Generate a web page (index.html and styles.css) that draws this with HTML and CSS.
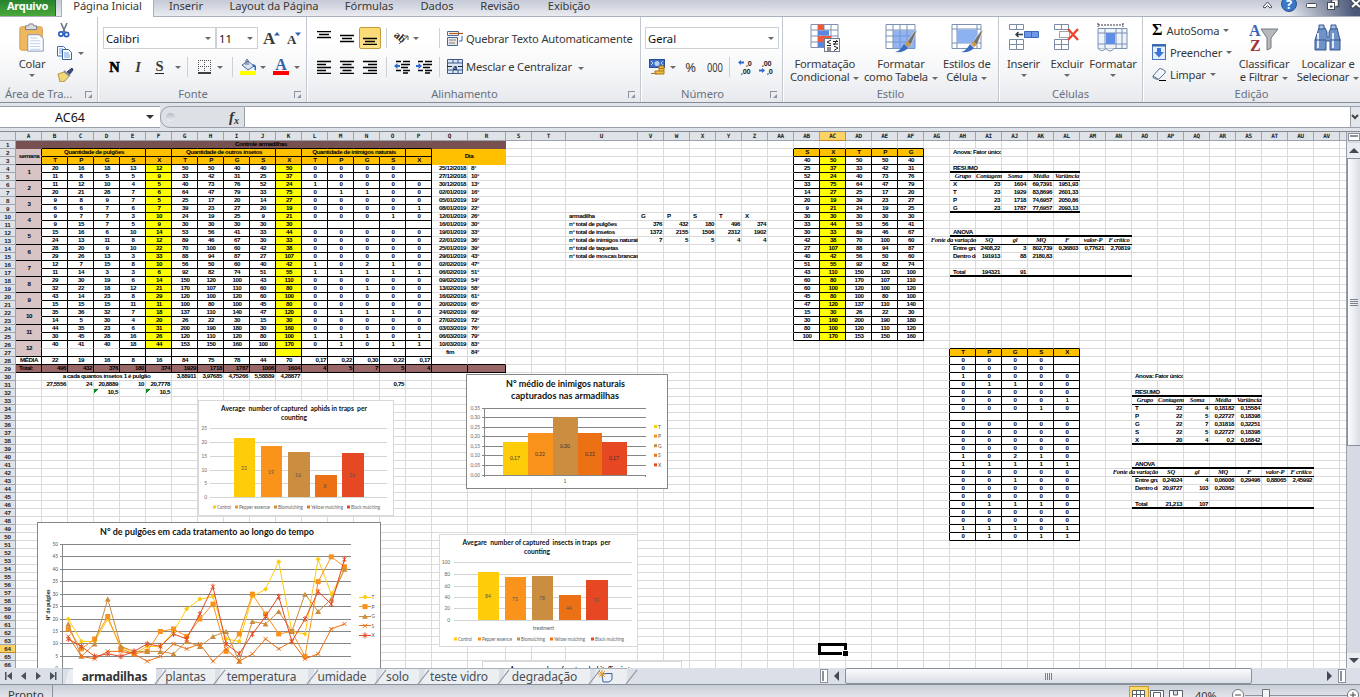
FILE: index.html
```html
<!DOCTYPE html>
<html lang="pt-BR">
<head>
<meta charset="utf-8">
<title>armadilhas</title>
<link rel="stylesheet" href="styles.css">
</head>
<body>
<div class="app">
  <nav class="tabs">
    <span class="tab file">Arquivo</span>
    <span class="tab active">Página Inicial</span>
    <span class="tab t-ins">Inserir</span>
    <span class="tab t-lay">Layout da Página</span>
    <span class="tab t-for">Fórmulas</span>
    <span class="tab t-dad">Dados</span>
    <span class="tab t-rev">Revisão</span>
    <span class="tab t-exi">Exibição</span>
    <svg class="wincontrols" width="100" height="16" viewBox="1260 0 100 16">
      <path d="M1263 7l4.500-5 4.500 5-2 1-2.500-2.500L1265 8z" fill="#fff" stroke="#444b57"/>
      <circle cx="1289" cy="4" r="7.500" fill="#3c78c8" stroke="#2a5595"/>
      <text x="1289" y="9" text-anchor="middle" class="help">?</text>
      <rect x="1306.500" y="3.500" width="10" height="4" rx="1" fill="#fff" stroke="#444b57"/>
      <path d="M1331.500 4V-.5h7v7h-3" fill="#fff" stroke="#444b57" stroke-width="1.500"/>
      <rect x="1327.500" y="2.500" width="7" height="7" fill="#fff" stroke="#444b57"/><rect x="1330" y="5.500" width="2.500" height="2" fill="#444b57"/>
      <path d="M1351 -1l9 9M1360 -1l-9 9" stroke="#444b57" stroke-width="4"/><path d="M1352 0l8 7M1360 0l-8 7" stroke="#fff" stroke-width="2"/>
    </svg>
  </nav>

  <section class="ribbon">
    <div class="group g-clip">
      <div class="clip-body">
        <div class="big"><svg width="28" height="32" viewBox="0 0 28 32">
          <rect x="1" y="4" width="24" height="25" rx="2" fill="#efb75e" stroke="#d39a45"/>
          <path d="M7 3h3l1-2h4l1 2h3v4H7z" fill="#d8dbe0" stroke="#737a84"/>
          <path d="M9.500 12.500h12l4.500 4v13.500H9.500z" fill="#fff" stroke="#7f93b5"/>
          <path d="M12 16h8M12 19h11M12 22h11M12 25h11M12 28h11" stroke="#b8cdee"/>
        </svg><b class="lbl">Colar</b><i class="arr"></i></div>
        <div class="smalls">
          <svg width="14" height="15" viewBox="0 0 14 15"><path d="M4 0l4 9M10 0L6 9" stroke="#6b7789" stroke-width="1.600"/><circle cx="4" cy="11" r="2.200" fill="none" stroke="#2b5fc0" stroke-width="1.700"/><circle cx="9.500" cy="11.500" r="2.200" fill="none" stroke="#2b5fc0" stroke-width="1.700"/></svg>
          <span class="copy"><svg width="16" height="14" viewBox="0 0 16 14"><path d="M.5.500h6l3 3v6.500h-9z" fill="#fff" stroke="#3d6fb8"/><path d="M2 3h4M2 5h5M2 7h5" stroke="#6aa0e8"/><path d="M5.500 3.500h6l3 3v7h-9z" fill="#fff" stroke="#3d5f98"/><path d="M7 7h5M7 9h6M7 11h6" stroke="#6aa0e8"/></svg><i class="arr"></i></span>
          <svg width="17" height="14" viewBox="0 0 17 14"><path d="M10 4l5-4 1 2-4 5z" fill="#3f4c7c" stroke="#2d355c"/><path d="M1 6l6-2 5 4-4 5-5 1z" fill="#f0d77a" stroke="#b89545"/><path d="M7 3l6 5" stroke="#8a8fa0" stroke-width="2"/></svg>
        </div>
      </div>
      <div class="gname"><span>Área de Tra...</span><i class="launch"></i></div>
    </div>

    <div class="group g-font">
      <div class="font-r1">
        <span class="combo">Calibri<i class="arr"></i></span><span class="combo">11<i class="arr"></i></span>
        <span class="serif grow">A<svg width="6" height="4" viewBox="0 0 6 4"><path d="M3 0l3 3.500H0z" fill="#2f5fb5"/></svg></span>
        <span class="serif shrink">A<svg width="6" height="4" viewBox="0 0 6 4"><path d="M0 .5h6L3 4z" fill="#2f5fb5"/></svg></span>
      </div>
      <div class="font-r2">
        <span class="serif heavy">N</span><span class="serif ital">I</span><span class="serif und">S</span><i class="arr"></i><i class="sep"></i>
        <svg width="13" height="14" viewBox="0 0 13 14"><path d="M.5 0v12M6.500 0v12M12.500 0v12M0 .5h13M0 6.500h13" stroke="#555" stroke-dasharray="1 1"/><path d="M0 13h13" stroke="#000" stroke-width="1.500"/></svg><i class="arr"></i><i class="sep"></i>
        <svg width="16" height="16" viewBox="0 0 16 16"><path d="M2 6l6-4 6 5-6 4z" fill="#dbe6f5" stroke="#52678c"/><path d="M6 6V1q1-1 2 0v5" fill="none" stroke="#52678c"/><path d="M13 6q4 2 2 5" fill="none" stroke="#2f68c4" stroke-width="2"/><rect y="12" width="16" height="4" fill="#ff0"/></svg><i class="arr"></i>
        <span class="serif fcolor">A</span><i class="arr"></i>
      </div>
      <div class="gname"><span>Fonte</span><i class="launch"></i></div>
    </div>

    <div class="group g-align">
      <div class="al-row al-top">
        <svg width="14" height="14" viewBox="0 0 14 14"><path d="M0 .5h14M2 3.500h10M0 6.500h14" class="ln"/></svg>
        <svg width="14" height="14" viewBox="0 0 14 14"><path d="M0 4.500h14M2 7.500h10M0 10.500h14" class="ln"/></svg>
        <span class="pressed"><svg width="14" height="14" viewBox="0 0 14 14"><path d="M0 7.500h14M2 10.500h10M0 13.500h14" class="ln"/></svg></span>
        <i class="sep"></i>
        <svg width="16" height="14" viewBox="0 0 16 14"><text x="0" y="9" class="ab abr" transform="rotate(40 5 6)">ab</text><path d="M5 13L14 5M10 5h4v4" fill="none" stroke="#555"/></svg><i class="arr"></i><i class="sep late"></i>
        <svg width="16" height="16" viewBox="0 0 16 16"><path d="M.5 1.500h11v4H.5z" fill="#fff" stroke="#4b6796"/><path d="M2 3.500h14" stroke="#b55a14" stroke-width="1.300"/><path d="M.5 7.500h10v8H.5z" fill="#dce7f8" stroke="#4b6796"/><path d="M2 10h7M2 13h6" stroke="#b07a3a"/><path d="M15 6v5h-3" fill="none" stroke="#2f5fb5"/></svg>
        <b class="lbl">Quebrar Texto Automaticamente</b>
      </div>
      <div class="al-row al-bottom">
        <svg width="14" height="14" viewBox="0 0 14 14"><path d="M0 1.500h14M0 4.500h9M0 7.500h14M0 10.500h9M0 13.500h14" class="ln"/></svg>
        <svg width="14" height="14" viewBox="0 0 14 14"><path d="M0 1.500h14M2.500 4.500h9M0 7.500h14M2.500 10.500h9M0 13.500h14" class="ln"/></svg>
        <svg width="14" height="14" viewBox="0 0 14 14"><path d="M0 1.500h14M5 4.500h9M0 7.500h14M5 10.500h9M0 13.500h14" class="ln"/></svg>
        <i class="sep"></i>
        <svg width="16" height="14" viewBox="0 0 16 14"><path d="M2 1.500h5M9 1.500h7M7 4.500h9M7 7.500h7M2 10.500h5M9 10.500h7M9 13h5" class="ln"/><path d="M0 6l3.500-3v2H6v2H3.500v2z" fill="#2f68d0"/></svg>
        <svg width="16" height="14" viewBox="0 0 16 14"><path d="M2 1.500h5M9 1.500h7M7 4.500h9M7 7.500h7M2 10.500h5M9 10.500h7M9 13h5" class="ln"/><path d="M6 6L2.500 3v2H0v2h2.500v2z" fill="#2f68d0"/></svg><i class="sep late"></i>
        <svg width="16" height="15" viewBox="0 0 16 15"><path d="M.5.500h15v14H.5zM.5 4h15M.5 11h15M6 .5V4M11 .5V4M6 11v3.500M11 11v3.500" fill="#dbe6f8" stroke="#3f5a88"/><path d="M0 7.500h5M11 7.500h5" stroke="#222"/><text x="8" y="10.500" text-anchor="middle" class="ab">a</text></svg>
        <b class="lbl">Mesclar e Centralizar<i class="arr"></i></b>
      </div>
      <div class="gname"><span>Alinhamento</span><i class="launch"></i></div>
    </div>

    <div class="group g-num">
      <span class="combo wide">Geral<i class="arr"></i></span>
      <div class="num-row">
        <svg width="16" height="16" viewBox="0 0 16 16"><rect x=".5" y=".5" width="15" height="8" fill="#3d6ec4" stroke="#254f98"/><circle cx="8" cy="4.500" r="2.500" fill="#b9d0f2"/><path d="M2 2l2 2-2 2M14 2l-2 2 2 2" stroke="#b9d0f2" fill="none"/><path d="M10 7h5v8H6v-3h4z" fill="#eebf43" stroke="#a87814"/><path d="M10 9.500h5M10 12h5M2 14.500h6" stroke="#a87814"/></svg>
        <i class="arr"></i><b class="lbl pct">%</b><b class="lbl zeros">000</b><i class="sep"></i>
        <svg width="16" height="16" viewBox="0 0 16 16"><text x="8" y="7" class="dec">,0</text><text x="3" y="15" class="dec">,00</text><path d="M0 3.500l3-2.500v1.500h3v2H3V6z" fill="#2f68d0"/></svg>
        <svg width="16" height="16" viewBox="0 0 16 16"><text x="3" y="7" class="dec">,00</text><text x="8" y="15" class="dec">,0</text><path d="M6 11.500L3 9v1.500H0v2h3V14z" fill="#2f68d0"/></svg>
      </div>
      <div class="gname"><span>Número</span><i class="launch"></i></div>
    </div>

    <div class="group g-style">
      <div class="bigs">
        <div class="big"><svg width="30" height="30" viewBox="0 0 30 30"><path d="M1 1.500h27v23H1zM8 1v23M14 1v23M21 1v23M1 7h27M1 13h27M1 19h27" fill="#fff" stroke="#7b90b2"/><path d="M8 1.500h6V7H8zM8 13h13v6H8z" fill="#ef5a3c"/><path d="M8 7.500h11v5H8zM8 19h6v5H8z" fill="#5a86e0"/><rect x="14.500" y="15.500" width="15" height="13" fill="#fff" stroke="#6d7b90"/><path d="M21 17l-4 2 4 2M17 22.500h4M23 18.500h5M23 21h5M27 17l-3 5M17 25h4M17 27h4M24 23l4 2-4 2.500" fill="none" stroke="#222"/></svg><b class="lbl">Formatação<br>Condicional<i class="arr"></i></b></div>
        <div class="big"><svg width="32" height="30" viewBox="0 0 32 30"><path d="M1 1.500h29v24H1zM8 1v24M15 1v24M22 1v24M1 7h29M1 13h29M1 19h29" fill="#fff" stroke="#7b90b2"/><path d="M8 7.500h22v18H8z" fill="#6f9be8" opacity=".75"/><path d="M29 9l3-2-6 15-4-3z" fill="#75706c" stroke="#eee" stroke-width=".6"/><path d="M22 18l4 4-3 2-3-3z" fill="#c99a4b"/><path d="M10 29q5-1 9-8l4 4q-4 5-13 4z" fill="#3a6cc0"/></svg><b class="lbl">Formatar<br>como Tabela<i class="arr"></i></b></div>
        <div class="big"><svg width="32" height="30" viewBox="0 0 32 30"><path d="M1 1.500h29v24H1zM6 1v24M26 1v24M1 6h29M1 20h29" fill="#fff" stroke="#7b90b2"/><path d="M6 6.500h20v13.500H6z" fill="#8cb2f2"/><path d="M29 9l3-2-6 15-4-3z" fill="#75706c" stroke="#eee" stroke-width=".6"/><path d="M22 18l4 4-3 2-3-3z" fill="#c99a4b"/><path d="M10 29q5-1 9-8l4 4q-4 5-13 4z" fill="#3a6cc0"/></svg><b class="lbl">Estilos de<br>Célula<i class="arr"></i></b></div>
      </div>
      <div class="gname"><span>Estilo</span></div>
    </div>

    <div class="group g-cells">
      <div class="bigs">
        <div class="big"><svg width="30" height="30" viewBox="0 0 30 30"><path d="M.5 1.500h14v5H.5zM7.500 1.500v5M.5 16.500h14v10H.5zM7.500 16.500v10M.5 21.500h14" fill="#fff" stroke="#7b8ba5"/><path d="M15.500 8.500h14v6h-14zM22.500 8.500v6" fill="#6c97e8" stroke="#3f69b5"/><path d="M7 11.500h7M9.500 9L7 11.500 9.500 14" fill="none" stroke="#333b4a" stroke-width="1.500"/></svg><b class="lbl">Inserir</b><i class="arr"></i></div>
        <div class="big"><svg width="26" height="30" viewBox="0 0 26 30"><path d="M.5 1.500h14v5H.5zM7.500 1.500v5M.5 16.500h14v10H.5zM7.500 16.500v10M.5 21.500h14" fill="#fff" stroke="#7b8ba5"/><path d="M5.500 8.500h10v6h-10z" fill="none" stroke="#444" stroke-dasharray="1 1"/><path d="M14 6l10 11M24 6L14 17" stroke="#f0412a" stroke-width="2.200"/></svg><b class="lbl">Excluir</b><i class="arr"></i></div>
        <div class="big"><svg width="32" height="30" viewBox="0 0 32 30"><path d="M1 0v4M26 0v4M1 2h25" stroke="#334" stroke-dasharray="2 1"/><path d="M1 5.500h29v20H1zM8 5v20M19 5v20M25 5v20M1 10h29M1 21h29" fill="#eff3fa" stroke="#7b90b2"/><rect x="9" y="10" width="9" height="11" fill="#5e8ee8"/><path d="M1 25.500q4 4 8 0M9 25.500q4 5 8 0" fill="#fff" stroke="#7b90b2"/></svg><b class="lbl">Formatar</b><i class="arr"></i></div>
      </div>
      <div class="gname"><span>Células</span></div>
    </div>

    <div class="group g-edit">
      <div class="edit-body">
        <div class="edit-list">
          <span><em class="sigma">Σ</em><b class="lbl">AutoSoma</b><i class="arr"></i></span>
          <span><svg width="14" height="16" viewBox="0 0 14 16"><rect x=".5" y=".5" width="13" height="15" fill="#e5eefc" stroke="#4b76b8"/><path d="M0 1.500h14" stroke="#3465ad" stroke-width="2"/><path d="M5 4h4v4h3l-5 5.500L2 8h3z" fill="#3d74d8"/></svg><b class="lbl">Preencher</b><i class="arr"></i></span>
          <span><svg width="14" height="13" viewBox="0 0 14 13"><path d="M1 8l6-7q1-1 3 0l3 2q1 1 0 2l-6 6q-1 1-3 0L1 9.500z" fill="#f2f5fa" stroke="#5c6f92"/><path d="M1 8l5 3" stroke="#5c6f92"/><path d="M7 12.500h7" stroke="#000"/></svg><b class="lbl">Limpar</b><i class="arr"></i></span>
        </div>
        <div class="big"><svg width="30" height="30" viewBox="0 0 30 30"><path d="M12 6h17l-7 9v10l-4 2V15z" fill="#b5b8bc" stroke="#77797d"/><text x="0" y="13" class="az a">A</text><text x="1" y="28" class="az z">Z</text></svg><b class="lbl">Classificar<br>e Filtrar<i class="arr"></i></b></div>
        <div class="big"><svg width="28" height="26" viewBox="0 0 28 26"><path d="M5 3h6l2 4v5h2V7l2-4h6l3 12v10H16v-9h-4v9H1V15z" fill="#6f93c8" stroke="#35568f"/><path d="M5 0h5v4H5zM17 0h5v4h-5z" fill="#a9c1e4" stroke="#35568f"/><path d="M4 8v15M19 8v15" stroke="#dfe9f8" stroke-width="2"/><path d="M1 15h11M16 15h11" stroke="#35568f"/></svg><b class="lbl">Localizar e<br>Selecionar<i class="arr"></i></b></div>
      </div>
      <div class="gname"><span>Edição</span></div>
    </div>
  </section>

  <div class="formula">
    <span class="namebox"><span>AC64</span><i class="arr dark"></i></span>
    <span class="fx"><i class="knob"></i><em>f<sub>x</sub></em></span>
    <span class="finput"></span>
    <span class="fexp"><svg width="8" height="6" viewBox="0 0 8 6"><path d="M1 1l3 3 3-3" fill="none" stroke="#444" stroke-width="2"/></svg></span>
  </div>

  <div class="work">
    <div class="sheet"><div class="grid" id="grid"></div><div class="charts" id="charts"></div></div>
    <div class="vscroll"><i class="split"></i><i class="btn up"></i><i class="thumb"><i></i><i></i><i></i><i></i></i><i class="btn down"></i></div>
  </div>

  <div class="sheetbar">
    <svg width="63" height="16" viewBox="0 0 63 16"><g fill="#4a4f58"><path d="M5 4h1.500v8H5zM12 4v8L7 8zM26 4v8l-5-4zM36 4v8l5-4zM50 4v8l5-4zM55 4h1.500v8H55z"/></g><path d="M62.500 0v16" stroke="#a5abb5"/></svg>
    <span class="st first"></span><span class="st on w1">armadilhas</span><span class="st w2">plantas</span><span class="st w3">temperatura</span><span class="st w4">umidade</span><span class="st w5">solo</span><span class="st w6">teste vidro</span><span class="st w7">degradação</span>
    <span class="st w8"><svg width="16" height="13" viewBox="0 0 16 13"><path d="M4 3.500h10v6l-3 2.500H5z" fill="#e9f0fb" stroke="#3d5f98"/><path d="M4 0v8M0 4h8M1 1l6 6M7 1L1 7" stroke="#e09a2a"/></svg></span>
    <span class="fill"></span>
    <span class="hscroll"><i class="handle"></i><i class="hb left"></i><i class="hthumb"><i></i><i></i><i></i><i></i></i><i class="hb right"></i><i class="handle"></i></span>
  </div>
  <footer class="status"><span class="ready">Pronto</span>
    <span class="views"><svg width="231" height="14" viewBox="1129 684 231 14">
      <rect x="1129.500" y="685.500" width="19" height="14" fill="#ffd868" stroke="#c49a35"/>
      <path d="M1132.500 689.500h12v9h-12zM1136.500 689v9M1140.500 689v9M1132 693.500h12M1150.500 689.500h13v9h-13zM1153.500 691.500h7v7h-7zM1169.500 689.500h13v9h-13zM1173.500 689v5h4v-5" fill="#fff" stroke="#56606f"/>
      <text x="1195" y="698.500" class="zoomtx">40%</text>
      <circle cx="1238" cy="694" r="5.500" fill="#fff" stroke="#70757e"/><path d="M1235 694h6" stroke="#444"/>
      <path d="M1245 694.500h103" stroke="#8b919c"/><path d="M1262.500 688.500h7v10h-7z" fill="#f4f5f7" stroke="#70757e"/>
      <circle cx="1353" cy="694" r="5.500" fill="#fff" stroke="#70757e"/><path d="M1350 694h6M1353 691v6" stroke="#444"/>
    </svg></span>
  </footer>
</div>
<script src="sheet.js"></script>
</body>
</html>
```
FILE: styles.css
```css
* { box-sizing: border-box; }
body { margin: 0; width: 1360px; height: 697px; overflow: hidden; background: #dfe3ea; font-family: "Noto Sans", "Open Sans", sans-serif; font-size: 11.200px; color: #383838; }
.app { display: flex; flex-direction: column; height: 697px; overflow: hidden; }
svg { display: block; flex: none; }
i, em { font-style: normal; }
b { font-weight: normal; }

.tabs { height: 17px; flex: none; display: flex; background: linear-gradient(90deg, transparent 1290px, #4a5878 1355px), linear-gradient(#c5cad7, #e9ebf0); border-bottom: 1px solid #a9b0ba; }
.tab { height: 16px; line-height: 12px; text-align: center; white-space: nowrap; letter-spacing: -.1px; }
.file { width: 56px; background: linear-gradient(#27822f, #4aa83a); color: #fff; font-weight: bold; font-size: 11px; border-right: 1px solid #1c6a24; letter-spacing: -.25px; }
.active { width: 93px; margin-left: 5px; height: 17px; background: #fff; border: 1px solid #a9b0ba; border-width: 0 1px; }
.t-ins { width: 64px; } .t-lay { width: 112px; } .t-for { width: 78px; } .t-dad { width: 58px; } .t-rev { width: 68px; } .t-exi { width: 70px; }
.wincontrols { margin-left: auto; }
.help { font: bold 13px "Open Sans", sans-serif; fill: #fff; }

.ribbon { height: 86px; flex: none; display: flex; background: linear-gradient(#fff 30%, #f3f4f6 70%, #e7e9ed); border-bottom: 1px solid #868c95; }
.group { display: flex; flex-direction: column; border-right: 1px solid #c3c8d0; box-shadow: 1px 0 #fff; }
.g-clip { width: 98px; } .g-font { width: 209px; } .g-align { width: 334px; } .g-num { width: 142px; } .g-style { width: 216px; } .g-cells { width: 144px; } .g-edit { width: 217px; border: 0; }
.gname { margin-top: auto; height: 16px; display: flex; justify-content: center; align-items: center; position: relative; color: #68717f; line-height: 12px; white-space: nowrap; }
.g-font .gname, .g-align .gname, .g-num .gname { padding-right: 18px; }
.gname span { letter-spacing: -.1px; }
.g-clip .gname { justify-content: flex-start; padding-left: 5px; }
.launch { position: absolute; right: 5px; top: 5px; width: 7px; height: 7px; border: 1px solid #8b929d; border-width: 1px 0 0 1px; }
.launch::after { content: ""; position: absolute; right: 0; bottom: 0; border: 2px solid #8b929d; border-top-color: transparent; border-left-color: transparent; }
.arr { display: inline-block; width: 0; height: 0; border: 3px solid transparent; border-top: 3px solid #6a6a6a; border-bottom: 0; vertical-align: middle; flex: none; }
.arr.dark { border-width: 4px 4px 0; border-top-color: #333; }
.sep { width: 1px; height: 20px; background: #cdd1d7; }
.lbl { white-space: nowrap; line-height: 13px; text-align: center; letter-spacing: -.2px; }
.lbl .arr { margin-left: 4px; }
.big { display: flex; flex-direction: column; align-items: center; height: 68px; }
.big svg { height: 30px; margin: 6px 0 4px; }
.big > .arr { margin-top: 4px; }

.clip-body { display: flex; height: 68px; }
.clip-body .big { width: 64px; margin-right: -8px; }
.smalls { display: flex; flex-direction: column; gap: 8px; padding: 6px 0 0 1px; }
.copy { display: flex; align-items: center; gap: 5px; }

.combo { display: flex; align-items: center; justify-content: space-between; height: 22px; border: 1px solid #cdd0d4; background: #fff; color: #111; padding: 0 4px 0 2px; }
.combo.wide { margin: 10px 3px 0 4px; width: 134px; }
.font-r1 { display: grid; grid-template-columns: 113px 42px 21px 24px; padding: 10px 0 0 5px; height: 32px; }
.serif { font-family: "Liberation Serif", serif; font-weight: bold; color: #3a3a3a; display: flex; line-height: 22px; }
.grow { font-size: 17px; line-height: 24px; padding-left: 5px; } .shrink { font-size: 13px; line-height: 26px; padding-left: 8px; }
.grow svg { margin: 5px 0 0 -1px; } .shrink svg { margin: 5px 0 0 -1px; }
.font-r2 { display: grid; grid-template-columns: 31px 16px 27px 9px 10px 24px 8px 16px 16px 14px 22px 9px; justify-items: center; align-items: center; height: 28px; padding-left: 1px; margin-top: 4px; }
.font-r2 .serif { font-size: 14.500px; line-height: 15px; }
.font-r2 .heavy { color: #000; -webkit-text-stroke: .6px #000; }
.ital { font-style: italic; }
.font-r2 .und { border-bottom: 1.500px solid #222; line-height: 13px; }
.font-r2 .fcolor { font-size: 16px; line-height: 12px; color: #345fa8; border-bottom: 4px solid #f00; width: 16px; justify-content: center; }
.ln { stroke: #000; stroke-width: 1.400; fill: none; }
.al-row { display: grid; justify-items: center; align-items: center; height: 29px; padding-left: 5px; }
.al-top { grid-template-columns: 23px 23px 23px 11px 20px 7px 28px 16px auto; margin-top: 6px; height: 30px; }
.al-bottom { grid-template-columns: 23px 23px 23px 11px 20px 23px 12px 16px auto; height: 27px; }
.al-row .lbl { justify-self: start; margin-left: 3px; }
.al-row .late { justify-self: end; margin-right: 7px; }
.al-row .lbl .arr { margin-left: 6px; }
.pressed { width: 22px; height: 22px; border: 1px solid #c29b3a; border-radius: 2px; background: linear-gradient(#fbd872, #ffe48a); display: flex; align-items: center; justify-content: center; }
.ab { font: bold 9px "Liberation Serif", serif; fill: #222; } .abr { font-size: 11px; }
.dec { font: bold 7px "Noto Sans", sans-serif; fill: #333; letter-spacing: -.3px; }
.num-row { display: grid; grid-template-columns: 26px 5px 31px 17px 13px 19px 24px; justify-items: center; align-items: center; height: 30px; margin-top: 3px; padding-left: 3px; }
.pct { font-size: 13px; } .zeros { font-size: 13px; transform: scaleX(.72); }
.bigs { display: flex; }
.g-style .big:nth-child(1) { width: 84px; } .g-style .big:nth-child(2) { width: 69px; } .g-style .big:nth-child(3) { width: 63px; }
.g-cells .big:nth-child(1) { width: 49px; } .g-cells .big:nth-child(2) { width: 38px; } .g-cells .big:nth-child(3) { width: 54px; }
.edit-body { display: flex; height: 68px; }
.edit-list { width: 86px; padding-top: 2px; }
.edit-list span { display: flex; align-items: center; height: 22px; padding-left: 9px; gap: 4px; }
.edit-list svg, .sigma { width: 14px; text-align: center; }
.sigma { font: bold 16px "Liberation Serif", serif; color: #000; }
.g-edit .big:nth-child(2) { width: 70px; } .g-edit .big:nth-child(3) { width: 58px; }
.az { font: bold 16px "Liberation Serif", serif; } .a { fill: #3a66b8; } .z { fill: #a03434; }

.formula { height: 29px; flex: none; display: flex; padding: 3px 0 4px; background: #dfe3ea; border-bottom: 1px solid #868b93; }
.formula > span { border: 1px solid #9aa0aa; border-width: 1px 0; height: 22px; }
.namebox { width: 160px; background: #fff; display: flex; align-items: center; justify-content: space-between; padding: 0 6px 0 55px; color: #111; font-size: 12.500px; }
.formula > .fx { width: 85px; display: flex; align-items: center; justify-content: space-between; padding-right: 5px; border-width: 1px; border-radius: 10px 0 0 10px; background: #dde1e6; }
.knob { width: 9px; height: 8px; border-radius: 50%; margin-left: 5px; background: linear-gradient(#b5bac2, #eceef1); }
.fx em { font: italic bold 15px "Liberation Serif", serif; color: #333; } .fx sub { font-size: 10px; vertical-align: -2px; }
.finput { flex: 1; background: #fff; }
.formula > .fexp { width: 10px; border-left-width: 1px; display: flex; align-items: center; background: #e3e6ea; }

.work { height: 536px; flex: none; display: flex; }
.sheet { width: 1346px; height: 536px; overflow: hidden; position: relative; background: #fff; }
.grid { display: grid; grid-template-columns: 16px repeat(16, 26px) 36px 38px 26px 34px 72px repeat(27, 26px) 7px; grid-template-rows: 9px repeat(66, 8px); font: bold 6.200px/6px "Liberation Sans", Arial, sans-serif; letter-spacing: -.4px; color: #000; }
.c { border: solid #dadada; border-width: 0 1px 1px 0; }
.hd { background: #dfe3e8; border-color: #9da3ac; color: #222; text-align: center; white-space: nowrap; overflow: hidden; line-height: 7px; letter-spacing: -.2px; }
.ch { line-height: 8px; font-family: "DejaVu Sans Mono", monospace; font-size: 6px; letter-spacing: -.3px; }
.hd.sel { background: #fcd364; border-color: #c08a2b; }
.orange { background: #ffc000; } .yellow { background: #ff0; } .pink { background: #d8c4c4; } .brown { background: #775050; } .wine { background: #996767; }
.nb { border-color: transparent; }
.br { border-right-color: #000; } .bb { border-bottom-color: #000; } .gb { border-bottom-color: #dadada; }
.mr { border-right-color: transparent; }
.t { white-space: nowrap; overflow: hidden; display: flex; align-items: center; justify-content: center; min-width: 0; z-index: 1; padding-bottom: 2px; }
.t.l { justify-content: flex-start; padding-left: 3px; } .t.r { justify-content: flex-end; padding-right: 2px; }
.t.o { overflow: visible; } .t.w { background: #fff; margin: 0 1px 1px 0; padding-bottom: 1px; }
.t.i { font-style: italic; font-family: "Liberation Serif", serif; font-size: 6.500px; letter-spacing: -.2px; border-bottom: 1px solid #000; padding-bottom: 1px; }
.t.i.o { justify-content: flex-end; }
.thick { border-bottom: 2px solid #000; }
.tri { width: 5px; height: 5px; background: linear-gradient(135deg, #0a8a20 50%, transparent 50%); z-index: 2; }
.cursor { outline: 3px solid #000; outline-offset: -1px; margin: 0 1px 0 0; z-index: 3; position: relative; }
.cursor::after { content: ""; position: absolute; right: -3px; bottom: -3px; width: 5px; height: 5px; background: #000; border: solid #fff; border-width: 1px 0 0 1px; }
.charts svg { position: absolute; background: #fff; z-index: 5; }
.charts text { font-family: Lato, "Open Sans", sans-serif; }

.vscroll { width: 14px; height: 536px; background: #d5dae3; border-left: 1px solid #9aa0aa; display: flex; flex-direction: column; }
.split { height: 8px; background: #fff; border: 1px solid #8b919b; margin: 1px 0 2px 1px; flex: none; box-shadow: inset 0 0 0 1px #fff, inset 0 3px #8b919b; }
.btn { height: 15px; flex: none; background: #e9ecf1; display: flex; justify-content: center; align-items: center; }
.btn::after { content: ""; border: 5px solid transparent; border-bottom-color: #444a54; border-top: 0; }
.down { margin-top: auto; } .down::after { border-top: 5px solid #444a54; border-bottom: 0; }
.thumb { height: 288px; border: 1px solid #8b919b; border-right: 0; background: linear-gradient(90deg, #fafbfc, #d9dee6); display: flex; flex-direction: column; align-items: center; justify-content: center; gap: 1px; }
.thumb i { width: 8px; height: 1px; background: #7b828e; }

.sheetbar { height: 17px; flex: none; display: flex; background: #dbe0e8; border-bottom: 1px solid #8b919b; color: #4a4f58; font-size: 12px; letter-spacing: -.15px; overflow: hidden; }
.st { height: 16px; line-height: 15px; text-align: center; background: linear-gradient(105deg, transparent 6px, #eceff2 6px); border-top: 1px solid #a9afb9; position: relative; white-space: nowrap; }
.st::after { content: ""; position: absolute; right: -5px; top: -1px; width: 1px; height: 18px; background: #8b919b; transform: rotate(38deg); z-index: 2; }
.on { background: #fff; font-weight: bold; color: #333; border-top-color: #fff; }
.first { width: 10px; } .first::after { display: none; } .w1 { width: 83px; } .w2 { width: 59px; } .w3 { width: 93px; } .w4 { width: 68px; } .w5 { width: 43px; } .w6 { width: 80px; } .w7 { width: 91px; } .w8 { width: 37px; padding: 1px 0 0 8px; }
.fill { flex: 1; }
.hscroll { width: 540px; display: flex; height: 16px; align-items: center; }
.handle { width: 8px; height: 14px; border: 1px solid #8b919b; background: #fff; box-shadow: inset 0 0 0 1px #fff, inset 3px 0 #8b919b; }
.hb { width: 17px; display: flex; justify-content: center; } .hb::after { content: ""; border: 5px solid transparent; border-right-color: #444a54; border-left: 0; }
.right { margin-left: auto; } .right::after { border-left: 5px solid #444a54; border-right: 0; }
.right + .handle { margin-right: 14px; }
.hthumb { width: 407px; height: 16px; border: 1px solid #8b919b; border-radius: 2px; background: linear-gradient(#fafbfc, #d9dee6); display: flex; justify-content: center; align-items: center; gap: 1px; }
.hthumb i { width: 1px; height: 7px; background: #7b828e; }
.status { flex: 1; display: flex; background: linear-gradient(#c9ced7, #e1e4ea); justify-content: space-between; overflow: hidden; }
.ready { width: 53px; border-right: 1px solid #8b919b; padding-left: 8px; line-height: 19px; height: 14px; }
.zoomtx { font: 11px "Noto Sans", sans-serif; fill: #383838; }
```
FILE: sheet.js
```javascript
const grid = document.getElementById('grid');
const cells = {};
const names = [];
for (let i = 1; i <= 49; i++) names.push(i <= 26 ? String.fromCharCode(64 + i) : 'A' + String.fromCharCode(64 + i - 26));
const col = n => names.indexOf(n) + 1;
const ROWS = 66, COLS = 49;

for (let r = 0; r <= ROWS; r++) {
  for (let c = 0; c <= COLS; c++) {
    const d = document.createElement('div');
    d.className = 'c' + (r === 0 || c === 0 ? ' hd' : '') + (r === 0 ? ' ch' : '');
    if (r === 0 && c > 0 && c < 49) d.textContent = names[c - 1];
    if (c === 0 && r > 0) d.textContent = r;
    if ((r === 0 && c === col('AC')) || (c === 0 && r === 64)) d.classList.add('sel');
    d.style.gridArea = `${r + 1}/${c + 1}`;
    grid.append(d);
    cells[r + ',' + c] = d;
  }
}

function area(r, c, r2, c2, cls, txt) {
  const d = document.createElement('div');
  d.className = cls;
  d.style.gridArea = `${r + 1}/${c + 1}/${r2 + 2}/${c2 + 2}`;
  if (txt !== undefined) d.textContent = txt;
  grid.append(d);
  return d;
}
const put = (r, c, txt, cls = '') => area(r, c, r, c, 't ' + cls, txt);
function fill(r, c, r2, c2, cls) {
  for (let y = r; y <= r2; y++) for (let x = c; x <= c2; x++) cells[y + ',' + x].classList.add(...cls.split(' '));
}
function box(r, c, r2, c2) {
  fill(r, c, r2, c2, 'br bb');
  if (c > 1) fill(r, c - 1, r2, c - 1, 'br');
  if (r > 1) fill(r - 1, c, r - 1, c2, 'bb');
}
const nums = s => s.split(' ');

/* trap counts per week */
const cols = {
  B: '20 11 11 20 9 6 9 9 15 24 28 29 12 11 29 32 43 15 35 14 44 30 40',
  C: '16 8 12 21 8 6 7 15 16 13 20 26 7 14 30 22 14 15 36 5 35 45 41',
  D: '18 5 10 28 9 7 7 7 6 11 9 13 15 3 19 18 23 15 32 30 23 28 40',
  E: '13 5 4 7 7 6 3 5 10 8 10 3 8 3 6 12 8 11 7 4 6 16 18',
  F: '12 9 5 6 5 7 10 9 14 12 22 33 10 6 14 21 29 11 18 20 31 26 44',
  G: '50 33 40 64 25 39 24 30 53 89 70 88 56 92 150 170 120 100 137 26 200 120 153',
  H: '50 42 73 47 17 23 19 30 56 46 100 94 50 82 120 107 100 80 110 22 190 110 150',
  I: '40 31 76 79 20 27 25 30 41 67 60 87 60 74 100 110 120 100 140 30 180 120 160',
  J: '40 25 52 33 14 20 9 30 33 30 42 27 40 51 43 60 60 45 47 15 30 80 100',
  K: '50 37 24 75 27 19 21 30 44 33 38 107 42 55 110 80 100 80 120 30 160 100 170'
};
const enemies = ['0000 ', '0000 ', '10000', '01100', '00000', '00001', '00010', '     ', '00000', '00000', '00000', '00000', '10210', '11111', '00000', '00100', '00000', '00000', '01110', '00000', '00000', '11101', '01011'];

fill(1, 1, 1, 18, 'brown nb');
area(1, 1, 1, 18, 't', 'Controle armadilhas');
box(2, 2, 28, 16);
fill(2, 2, 3, 16, 'orange');
fill(2, 17, 3, 18, 'orange nb');
fill(2, 1, 27, 1, 'pink nb');
fill(2, 1, 28, 1, 'br');
[[2, 5, 'Quantidade de pulgões'], [7, 10, 'Quantidade de outros insetos'], [12, 15, 'Quantidade de inimigos naturais']].forEach(([a, b, s]) => {
  fill(2, a, 2, b - 1, 'mr');
  area(2, a, 2, b, 't', s);
});
'TPGSXTPGSXTPGSX'.split('').forEach((s, i) => put(3, 2 + i, s));
area(2, 17, 3, 18, 't', 'Dia');
area(2, 1, 3, 1, 't', 'semana');
fill(4, 6, 26, 6, 'yellow');
fill(4, 11, 27, 11, 'yellow');
fill(26, 2, 26, 4, 'gb');
for (let w = 0; w < 13; w++) cells[(3 + 2 * w) + ',1'].classList.add('bb');
for (let w = 1; w <= 12; w++) area(2 + 2 * w, 1, 3 + 2 * w, 1, 't', w);
for (const k in cols) nums(cols[k]).forEach((v, i) => put(4 + i, col(k), v));
enemies.forEach((row, i) => row.split('').forEach((v, j) => {
  if (v !== ' ') { put(4 + i, 12 + j, v); }
}));
const dates = '25/12/2018 27/12/2018 30/12/2018 02/01/2019 05/01/2019 08/01/2019 12/01/2019 16/01/2019 19/01/2019 22/01/2019 25/01/2019 29/01/2019 02/02/2019 06/02/2019 09/02/2019 13/02/2019 16/02/2019 20/02/2019 24/02/2019 27/02/2019 03/03/2019 06/03/2019 10/03/2019 fim';
const days = '8 10 13 16 19 22 26 30 33 36 39 43 47 51 54 58 61 65 69 72 76 79 83 84';
nums(dates).forEach((v, i) => put(4 + i, 17, v, v === 'fim' ? '' : 'r'));
nums(days).forEach((v, i) => put(4 + i, 18, v + '°', 'l'));
put(28, 1, 'MÉDIA', 'o');
nums('22 19 16 8 16 84 75 78 44 70').forEach((v, i) => put(28, 2 + i, v));
nums('0,17 0,22 0,30 0,22 0,17').forEach((v, i) => put(28, 12 + i, v, 'r'));
box(29, 1, 29, 18);
fill(29, 1, 29, 18, 'wine');
put(29, 1, 'Total:', 'l');
nums('496 432 376 180 374 1929 1718 1787 1006 1604 4 5 7 5 4').forEach((v, i) => put(29, 2 + i, v, 'r'));
area(30, 2, 30, 6, 't w', 'a cada quantos insetos 1 é pulgão');
nums('3,88911 3,97685 4,75266 5,58889 4,28877').forEach((v, i) => put(30, 7 + i, v, 'r'));
nums('27,5556 24 20,8889 10 20,7778').forEach((v, i) => put(31, 2 + i, v, 'r'));
put(31, 15, '0,75', 'r');
[4, 6].forEach(c => { put(32, c, '10,5', 'r'); area(32, c, 32, c, 'tri'); });

/* totals by treatment */
['armadilha', 'n° total de pulgões', 'n° total de insetos', 'n° total de inimigos naturais', 'n° total de taquetas', 'n° total de moscas brancas'].forEach((v, i) => put(10 + i, 21, v, 'l'));
nums('G P S T X').forEach((v, i) => put(10, 22 + i, v, 'l'));
['376 432 180 496 374', '1372 2155 1506 2312 1902', '7 5 5 4 4'].forEach((s, y) => nums(s).forEach((v, i) => put(11 + y, 22 + i, v, 'r')));

/* insect table */
box(2, 28, 25, 32);
fill(2, 28, 2, 32, 'orange');
fill(3, 29, 25, 29, 'yellow');
['J', 'K', 'G', 'H', 'I'].forEach((k, i) => {
  put(2, 28 + i, 'SXTPG'[i]);
  nums(cols[k]).forEach((v, y) => put(3 + y, 28 + i, v));
});

/* natural enemy table */
box(27, 34, 50, 38);
fill(27, 34, 27, 38, 'orange');
'TPGSX'.split('').forEach((s, i) => put(27, 34 + i, s));
enemies.forEach((row, i) => row.split('').forEach((v, j) => { if (v !== ' ') put(28 + i, 34 + j, v); }));

/* variance analysis blocks */
function anova(r, c, groups, gap, lines) {
  area(r, c, r, c + 1, 't l w', 'Anova: Fator único');
  put(r + 2, c, 'RESUMO', 'l o');
  area(r + 2, c, r + 2, c + 4, 'thick');
  nums('Grupo Contagem Soma Média Variância').forEach((v, i) => put(r + 3, c + i, v, 'i'));
  groups.forEach((g, y) => nums(g).forEach((v, i) => put(r + 4 + y, c + i, v, i ? 'r' : 'l')));
  area(r + 3 + groups.length, c, r + 3 + groups.length, c + 4, 'thick');
  const a = r + 3 + groups.length + gap;
  put(a, c, 'ANOVA', 'l');
  area(a, c, a, c + 6, 'thick');
  ['Fonte da variação', 'SQ', 'gl', 'MQ', 'F', 'valor-P', 'F crítico'].forEach((v, i) => put(a + 1, c + i, v, i ? 'i' : 'i o'));
  lines.forEach((g, y) => g.split('|').forEach((v, i) => put(a + [2, 3, 5][y], c + i, v, i ? 'r' : 'l')));
  area(a + 5, c, a + 5, c + 6, 'thick');
}
anova(2, 34, ['X 23 1604 69,7391 1951,93', 'T 23 1929 83,8696 2601,33', 'P 23 1718 74,6957 2050,86', 'G 23 1787 77,6957 2093,13'], 3,
  ['Entre grupos|2408,22|3|802,739|0,36803|0,77621|2,70819', 'Dentro dos|191913|88|2180,83', 'Total|194321|91']);
anova(30, 41, ['T 22 4 0,18182 0,15584', 'P 22 5 0,22727 0,18398', 'G 22 7 0,31818 0,32251', 'S 22 5 0,22727 0,18398', 'X 20 4 0,2 0,16842'], 3,
  ['Entre grupos|0,24024|4|0,06006|0,29496|0,88065|2,45992', 'Dentro dos|20,9727|103|0,20362', 'Total|21,213|107']);
area(64, 29, 64, 29, 'cursor');

/* charts */
const pal = ['#ffcc0a', '#f9931c', '#cb8d3f', '#ec7014', '#e64823'];
const tx = (x, y, s, size, o = {}) => `<text x="${x}" y="${y}" font-size="${size}" text-anchor="${o.a || 'middle'}" fill="${o.f || '#555'}" ${o.b ? 'font-weight="bold"' : ''} ${o.l ? `textLength="${o.l}" lengthAdjust="spacingAndGlyphs"` : ''} ${o.t ? `transform="${o.t}"` : ''}>${s}</text>`;
const hl = (x1, x2, y, c) => `<path d="M${x1} ${Math.round(y) + .5}H${x2}" stroke="${c}"/>`;
const rect = (x, y, w, h, c) => `<rect x="${x}" y="${y}" width="${w}" height="${h}" fill="${c}"/>`;
function chart(x, y, w, h, edge, body) {
  document.getElementById('charts').insertAdjacentHTML('beforeend',
    `<svg style="left:${x}px;top:${y - 132}px" width="${w}" height="${h}" viewBox="${x} ${y} ${w} ${h}">${body}<rect x="${x + .5}" y="${y + .5}" width="${w - 1}" height="${h - 1}" fill="none" stroke="${edge}"/></svg>`);
}
const T = { b: 1, f: '#111' };
function columns(ys, labels, x1, x2, lx, edge) { return ys.map((y, i) => hl(x1, x2, y, edge) + tx(lx, y + 2, labels[i], 4.8, { a: 'end', f: '#666' })).join(''); }
function legend(y, items) { return items.map(([sx, x, l, s], i) => rect(sx, y - 1.5, 3, 3, pal[i]) + tx(x, y + 2, s, 4.8, { a: 'start', l, f: '#666' })).join(''); }

chart(198, 400, 196, 116, '#d9d9d9',
  tx(294, 411, 'Average&#160; number of captured&#160; aphids in traps&#160; per', 6.5, { ...T, l: 146 }) + tx(294, 420, 'counting', 6.5, { ...T, l: 26 }) +
  columns([428, 442, 456, 470, 483, 496.5], [25, 20, 15, 10, 5, 0], 210, 387, 207, '#d4d4d4') +
  [[234, 438, 21, 22], [261, 446, 21, 19], [288, 452, 22, 16], [315, 475, 22, 8], [342, 453, 22, 16]].map(([x, y, w, v], i) => rect(x, y, w, 497 - y, pal[i]) + tx(x + 10, (y + 497) / 2 + 2, v, 5)).join('') +
  legend(507, [[213, 217, 14, 'Control'], [235, 239, 31, 'Pepper essence'], [274, 278, 25, 'Biomulching'], [307, 311, 32, 'Yellow mulching'], [347, 351, 29, 'Black mulching']]));

chart(466, 374, 202, 115, '#868686',
  tx(565.5, 387, 'N° médio de inimigos naturais', 9.5, { ...T, l: 119 }) + tx(565, 399, 'capturados nas armadilhas', 9.5, { ...T, l: 108 }) +
  columns([408, 417, 427, 436, 446, 455, 465, 475], ['0,35', '0,30', '0,25', '0,20', '0,15', '0,10', '0,05', '0,00'], 482, 646, 480, '#868686') + '<path d="M484.500 408v69M645.500 475v2" stroke="#868686"/>' +
  [[503, 442, 25, '0,17'], [528, 433, 25, '0,22'], [553, 417, 25, '0,30'], [578, 433, 24, '0,22'], [602, 442, 25, '0,17']].map(([x, y, w, v], i) => rect(x, y, w, 475 - y, pal[i]) + tx(x + 12, (y + 475) / 2 + 1.5, v, 5, { f: '#333' })).join('') +
  tx(565, 483, '1', 5) + 'TPGSX'.split('').map((s, i) => rect(654, 425 + i * 9.600, 3, 3, pal[i]) + tx(658, 428.5 + i * 9.600, s, 5, { a: 'start' })).join(''));

const series = ['B', 'C', 'D', 'E', 'F'].map(k => nums(cols[k]).filter((v, i) => i !== 18));
const mark = (i, x, y) => [
  `<path d="M${x} ${y - 2.5}l2.500 2.500-2.500 2.500-2.500-2.500z" fill="${pal[0]}"/>`, rect(x - 2.5, y - 2.5, 5, 5, pal[1]),
  `<path d="M${x} ${y - 2.5}l3 5h-6z" fill="${pal[2]}"/>`, `<path d="M${x - 2} ${y - 2}l4 4m0-4l-4 4" stroke="${pal[3]}"/>`,
  `<path d="M${x - 2} ${y - 2}l4 4m0-4l-4 4m2-5v6" stroke="${pal[4]}"/>`][i];
let line = tx(207, 535, 'N° de pulgões em cada tratamento ao longo do tempo', 9.5, { ...T, l: 214 });
for (let i = 0; i <= 10; i++) { const y = 668.8 - i * 12.45; line += hl(60, 351, y - .5, '#868686') + tx(58, y + 1.5, i * 5, 4.8, { a: 'end' }); }
line += '<path d="M62.500 544v130" stroke="#868686"/>' + tx(48, 607, 'Nº de pulgões', 5, { ...T, l: 31, t: 'rotate(-90 48 605)' });
series.forEach((s, i) => {
  const p = s.map((v, n) => [68.3 + n * 13.15, 668.8 - v * 2.489]);
  line += `<polyline points="${p.join(' ')}" fill="none" stroke="${pal[i]}" stroke-width="1"/>` + p.map(q => mark(i, ...q)).join('');
  const ly = 597 + i * 9.6;
  line += hl(359, 371, ly - .5, pal[i]) + mark(i, 365, ly) + tx(371.500, ly + 2, 'TPGSX'[i], 4.8, { a: 'start' });
});
chart(37, 522, 344, 150, '#868686', line);

chart(439, 534, 199, 113, '#d9d9d9',
  tx(536.5, 545, 'Avegare&#160; number of captured&#160; insects in traps&#160; per', 6.5, { ...T, l: 148 }) + tx(537, 554, 'counting', 6.5, { ...T, l: 26 }) +
  columns([562, 574, 586, 597, 608, 619.5], [100, 80, 60, 40, 20, 0], 454, 632, 450, '#d4d4d4') +
  [[478, 572, 21, 84], [505, 577, 21, 75], [532, 576, 21, 78], [559, 595, 22, 44], [586, 580, 22, 70]].map(([x, y, w, v], i) => rect(x, y, w, 620 - y, pal[i]) + tx(x + 10, (y + 620) / 2 + 2, v, 5)).join('') +
  tx(543.5, 630, 'treatment', 5, { l: 21 }) +
  legend(639, [[454, 458, 14, 'Control'], [478, 482, 30, 'Pepper essence'], [517, 521, 24, 'Biomulching'], [550, 554, 31, 'Yellow mulching'], [591, 595, 29, 'Black mulching']]));
chart(482, 661, 200, 60, '#d9d9d9', tx(576, 671.5, 'Average number of captured whiteflies in traps', 6.5, { ...T, l: 132 }));
```
